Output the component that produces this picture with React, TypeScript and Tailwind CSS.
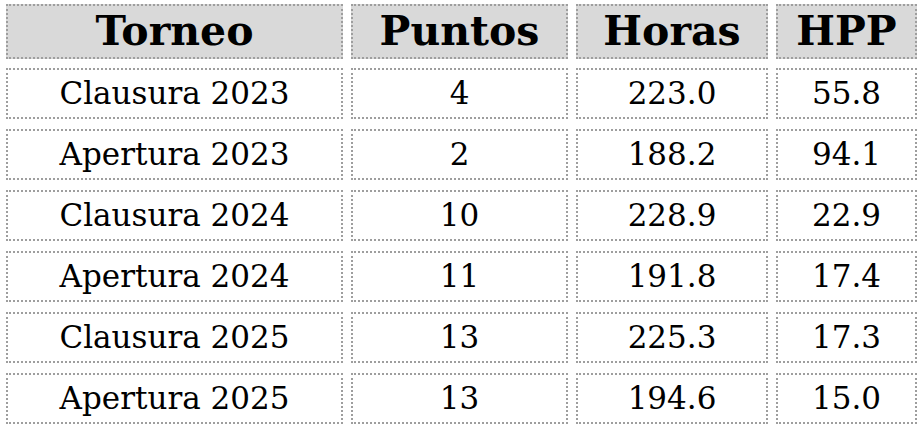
const rows = [
  ["Clausura 2023", "4", "223.0", "55.8"],
  ["Apertura 2023", "2", "188.2", "94.1"],
  ["Clausura 2024", "10", "228.9", "22.9"],
  ["Apertura 2024", "11", "191.8", "17.4"],
  ["Clausura 2025", "13", "225.3", "17.3"],
  ["Apertura 2025", "13", "194.6", "15.0"],
];

const cols = "grid grid-cols-[337px_217px_192px_141px] gap-x-[8px]";
const cell =
  "flex items-center justify-center border-2 border-dotted border-[#9e9e9e]";

const App = () => {
  return (
    <div className="w-[924px] h-[434px] bg-white pl-[6px] pt-[4px] font-['DejaVu_Serif',Georgia,serif] text-black overflow-hidden">
      <div className={cols}>
        {["Torneo", "Puntos", "Horas", "HPP"].map((h) => (
          <div key={h} className={`${cell} h-[55px] bg-[#d9d9d9] font-bold text-[41px] leading-none`}>
            {h}
          </div>
        ))}
      </div>
      <div className="mt-[9px] flex flex-col gap-y-[10px]">
        {rows.map((r) => (
          <div key={r[0]} className={cols}>
            {r.map((v, i) => (
              <div key={i} className={`${cell} h-[51px] text-[31px] leading-none`}>
                {v}
              </div>
            ))}
          </div>
        ))}
      </div>
    </div>
  );
};

export default App;
